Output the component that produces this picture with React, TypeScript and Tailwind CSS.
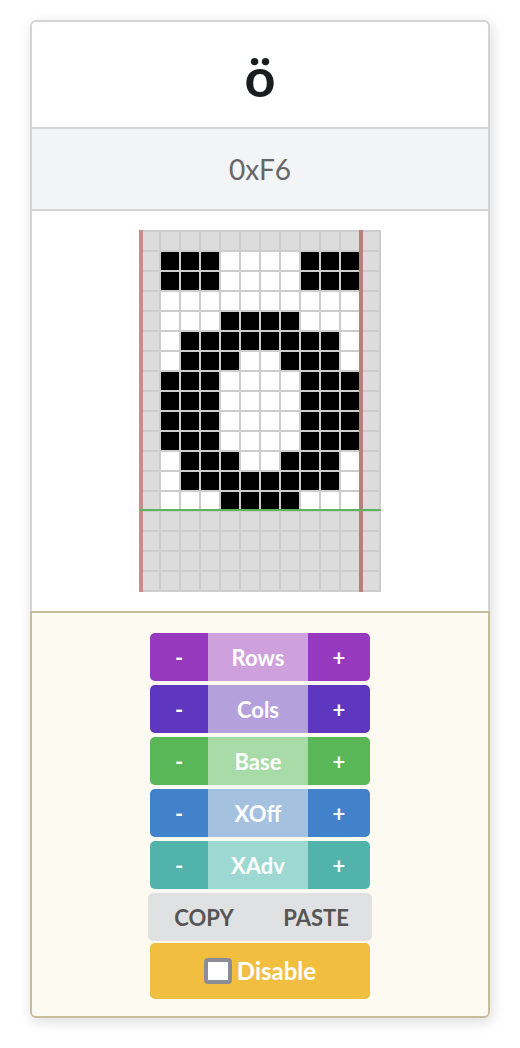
import React from "react";

const GLYPH = [
  "###....###",
  "###....###",
  "..........",
  "...####...",
  ".########.",
  ".###..###.",
  "###....###",
  "###....###",
  "###....###",
  "###....###",
  ".###..###.",
  ".########.",
  "...####...",
];

const COLS = 12;
const ROWS = 18;

function cellClass(r: number, c: number) {
  const inGlyph = r >= 1 && r <= 13 && c >= 1 && c <= 10;
  if (!inGlyph) return "bg-[#dcdcdc]";
  return GLYPH[r - 1][c - 1] === "#" ? "bg-black" : "bg-white";
}

function PixelGrid() {
  const cells = [];
  for (let r = 0; r < ROWS; r++) {
    for (let c = 0; c < COLS; c++) {
      cells.push(<div key={`${r}-${c}`} className={`w-[18px] h-[18px] ${cellClass(r, c)}`} />);
    }
  }
  return (
    <div className="relative w-[242px] h-[362px] p-[2px] bg-[#cdcdcd]">
      <div className="grid grid-cols-[repeat(12,18px)] gap-[2px]">{cells}</div>
      {/* origin / advance markers */}
      <div className="absolute left-0 top-0 w-[4px] h-full bg-[#c48c8c]" />
      <div className="absolute left-[220px] top-0 w-[4px] h-full bg-[#b77f7f]" />
      {/* baseline */}
      <div className="absolute left-0 top-[279px] w-full h-[2px] bg-[#5db55b]" />
    </div>
  );
}

interface CounterProps {
  label: string;
  dark: string;
  light: string;
}

function Counter({ label, dark, light }: CounterProps) {
  return (
    <div className="flex w-[220px] h-[48px] rounded-[5px] overflow-hidden text-white font-bold text-[22px]">
      <button className={`w-[58px] flex items-center justify-center ${dark}`}>-</button>
      <div className={`w-[100px] flex items-center justify-center ${light}`}>{label}</div>
      <button className={`flex-1 flex items-center justify-center ${dark}`}>+</button>
    </div>
  );
}

export default function App() {
  return (
    <div className="min-h-screen bg-white pt-5 px-[30px]" style={{ fontFamily: "Lato, 'Noto Sans', sans-serif" }}>
      <div className="w-[460px] rounded-[6px] shadow-[2px_4px_14px_rgba(0,0,0,0.14)]">
        {/* Top: glyph preview */}
        <div className="border-2 border-b-0 border-[#d4d4d5] rounded-t-[6px] bg-white">
          <div className="h-[105px] flex items-center justify-center text-[54px] font-bold text-[#1b1c1d] leading-none pt-1">
            ö
          </div>
          <div className="h-[84px] border-y-2 border-[#d4d4d5] bg-[#f3f4f5] flex items-center justify-center text-[28px] text-[#666]">
            0xF6
          </div>
          <div className="h-[400px] flex justify-center pt-[19px]">
            <PixelGrid />
          </div>
        </div>

        {/* Bottom: controls */}
        <div className="border-2 border-[#c9bc9c] rounded-b-[6px] bg-[#fdfaf2] pt-5 pb-[17px] flex flex-col items-center">
          <div className="flex flex-col gap-1">
            <Counter label="Rows" dark="bg-[#9639be]" light="bg-[#cfa1dc]" />
            <Counter label="Cols" dark="bg-[#5e36bf]" light="bg-[#b4a0da]" />
            <Counter label="Base" dark="bg-[#59b757]" light="bg-[#a8dba8]" />
            <Counter label="XOff" dark="bg-[#4282ca]" light="bg-[#a4c1e0]" />
            <Counter label="XAdv" dark="bg-[#52b2ac]" light="bg-[#9dd9d2]" />
          </div>
          <div className="mt-1 flex w-[224px] h-[48px] rounded-[5px] bg-[#e0e1e2] text-[22px] font-bold text-[#555]">
            <button className="flex-1 flex items-center justify-center">COPY</button>
            <button className="flex-1 flex items-center justify-center">PASTE</button>
          </div>
          <button className="mt-[2px] w-[220px] h-[56px] rounded-[5px] bg-[#f2be40] flex items-center justify-center gap-[5px] text-white font-bold text-[24px]">
            <span className="w-[28px] h-[26px] rounded-[4px] border-[4px] border-[#8c8c96] bg-white" />
            Disable
          </button>
        </div>
      </div>
    </div>
  );
}
